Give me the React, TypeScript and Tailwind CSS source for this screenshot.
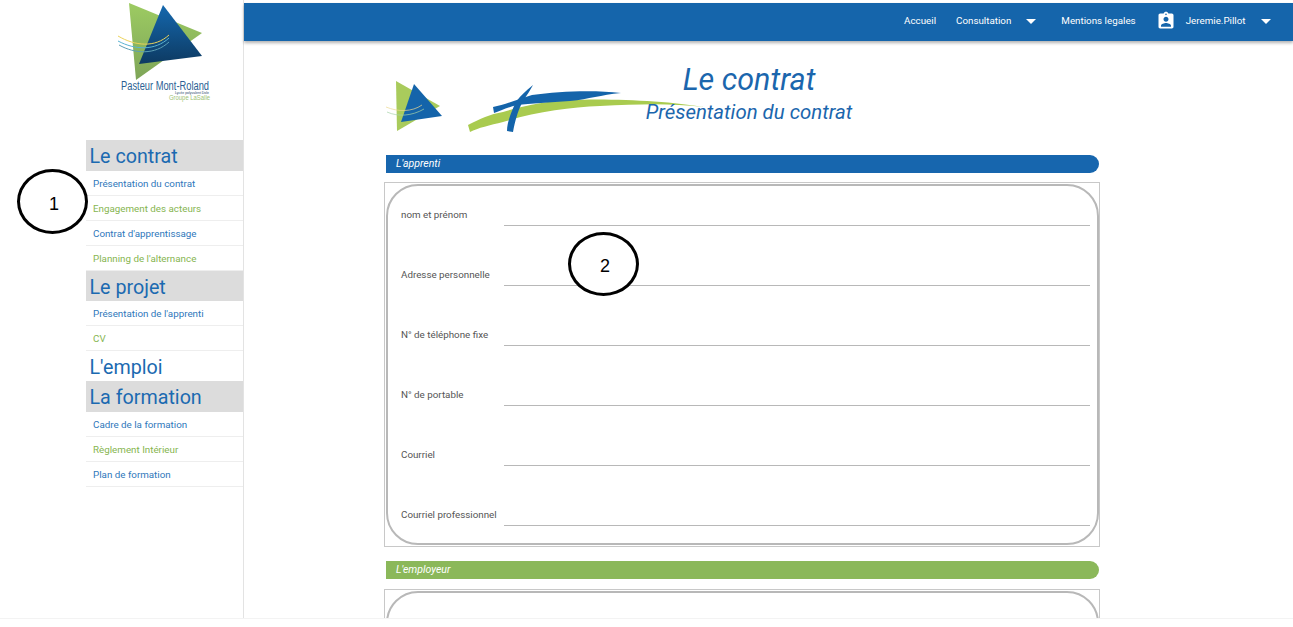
const font = "font-['Roboto',sans-serif]";

const MENU = [
  {
    title: "Le contrat",
    grey: true,
    items: [
      "Présentation du contrat",
      "Engagement des acteurs",
      "Contrat d'apprentissage",
      "Planning de l'alternance",
    ],
  },
  {
    title: "Le projet",
    grey: true,
    items: ["Présentation de l'apprenti", "CV"],
  },
  { title: "L'emploi", grey: false, items: [] },
  {
    title: "La formation",
    grey: true,
    items: ["Cadre de la formation", "Règlement Intérieur", "Plan de formation"],
  },
];

const APPRENTI = [
  "nom et prénom",
  "Adresse personnelle",
  "N° de téléphone fixe",
  "N° de portable",
  "Courriel",
  "Courriel professionnel",
];

function Caret() {
  return (
    <span className="h-0 w-0 border-x-[5px] border-t-[5px] border-x-transparent border-t-white" />
  );
}

function SchoolLogo() {
  return (
    <svg width="157" height="130" viewBox="86 3 157 130" className="block">
      <defs>
        <linearGradient id="logoBlue" x1="0" y1="0" x2="0" y2="1">
          <stop offset="0" stopColor="#1568ae" />
          <stop offset="1" stopColor="#0d3a62" />
        </linearGradient>
        <linearGradient id="logoGreen" x1="0" y1="0" x2="0" y2="1">
          <stop offset="0" stopColor="#9dcb62" />
          <stop offset="1" stopColor="#7ea558" />
        </linearGradient>
      </defs>
      <polygon points="129,3 202,33 136,80" fill="url(#logoGreen)" />
      <polygon points="163,5 202,56 139,64" fill="url(#logoBlue)" />
      <path d="M118 36 C135 46 155 48 169 35" fill="none" stroke="#ecd35a" strokeWidth="1" />
      <path d="M118 41 C135 50 155 51 169 38" fill="none" stroke="#58b3d3" strokeWidth="1" />
      <path d="M119 45 C135 54 155 55 169 42" fill="none" stroke="#5c9fb5" strokeWidth="1" />
      <text x="121" y="90" fontFamily="Liberation Sans, sans-serif" fontSize="12.5" textLength="88" lengthAdjust="spacingAndGlyphs" fill="#2c5f93">
        Pasteur Mont-Roland
      </text>
      <text x="175" y="94" fontFamily="Liberation Sans, sans-serif" fontSize="3.5" textLength="34" lengthAdjust="spacingAndGlyphs" fill="#28496e">
        Lycée polyvalent Dole
      </text>
      <text x="169" y="100" fontFamily="Liberation Sans, sans-serif" fontSize="7" textLength="41" lengthAdjust="spacingAndGlyphs" fill="#9cc274">
        Groupe LaSalle
      </text>
    </svg>
  );
}

function BannerArt() {
  return (
    <svg width="340" height="60" viewBox="384 78 340 60" className="absolute left-0 top-[19px]">
      <polygon points="396,82 440,107 397,132" fill="#a9cb5c" />
      <polygon points="414,85 442,117 401,123" fill="#1464aa" />
      <path d="M386 108 C398 113 412 113 422 106" fill="none" stroke="#ecd98f" strokeWidth="0.7" />
      <path d="M387 113 C398 118 412 117 424 110" fill="none" stroke="#a6d3a8" strokeWidth="0.7" />
      <path
        d="M468 126 C480 120 490 115 503 113 C525 106 550 102 570 101 C610 99 670 102 704 108 C670 104 640 105 600 107 C570 108 535 113 503 123 C490 126 478 129 470 133 Z"
        fill="#a9cb4f"
      />
      <path
        d="M493 108 C505 106 518 100 532 96 C560 92 595 91 621 94 C600 96 590 100 570 102 C550 103 530 105 517 106 C508 108 500 112 494 114 Z"
        fill="#1464aa"
      />
      <path d="M533 86 C526 92 518 98 514 107 C510 116 507 125 507 132 L513 133 C515 122 518 112 521 106 C524 100 530 92 533 86 Z" fill="#1464aa" />
    </svg>
  );
}

function Bar({ label, color }: { label: string; color: string }) {
  return (
    <div className={`ml-[2px] mr-[1px] h-[18px] rounded-r-[9px] pl-[10px] text-[10.5px] italic leading-[18px] text-white ${color}`}>
      {label}
    </div>
  );
}

export default function App() {
  return (
    <div className={`h-[627px] overflow-hidden bg-white ${font}`}>
      <div className="flex h-[619px] overflow-hidden border-b border-[#f3f3f3] pl-[86px]">
        <aside className="w-[158px] shrink-0 border-r border-[#e3e3e3] pt-[3px]">
          <div className="h-[137px]">
            <SchoolLogo />
          </div>
          {MENU.map((section) => (
            <div key={section.title}>
              <div
                className={`pl-[3.5px] text-[19.7px] leading-[33px] text-[#1b6ab1] ${
                  section.grey ? "h-[30.5px] bg-[#dcdcdc]" : "h-[30px]"
                }`}
              >
                {section.title}
              </div>
              {section.items.map((item, i) => (
                <div
                  key={item}
                  className={`h-[25px] border-b border-[#eeeeee] pl-[7px] text-[9.8px] leading-[25px] ${
                    i % 2 === 0 ? "text-[#2f78bb]" : "text-[#86b550]"
                  }`}
                >
                  {item}
                </div>
              ))}
            </div>
          ))}
        </aside>

        <div className="flex min-w-0 flex-1 flex-col pt-[3px]">
          <header className="flex h-[38px] shrink-0 items-center bg-[#1565ab] pb-[2px] pl-[660px] text-[9.8px] text-white shadow-[0_2px_3px_rgba(0,0,0,0.3)]">
            <span className="mr-[20px]">Accueil</span>
            <span className="mr-[15px]">Consultation</span>
            <Caret />
            <span className="ml-[25px] mr-[20px]">Mentions legales</span>
            <svg width="20" height="20" viewBox="0 0 24 24" fill="white" className="mr-[10px]">
              <path d="M19 3h-4.18C14.4 1.84 13.3 1 12 1c-1.3 0-2.4.84-2.82 2H5c-1.1 0-2 .9-2 2v14c0 1.1.9 2 2 2h14c1.1 0 2-.9 2-2V5c0-1.1-.9-2-2-2zm-7 0c.55 0 1 .45 1 1s-.45 1-1 1-1-.45-1-1 .45-1 1-1zm0 4c1.66 0 3 1.34 3 3s-1.34 3-3 3-3-1.34-3-3 1.34-3 3-3zm6 12H6v-1.4c0-2 4-3.1 6-3.1s6 1.1 6 3.1V19z" />
            </svg>
            <span className="mr-[15px]">Jeremie.Pillot</span>
            <Caret />
          </header>

          <main className="ml-[140px] w-[716px] shrink-0">
            <div className="relative mt-[17px] h-[97px] pt-[3px] text-center italic text-[#1b66ad]">
              <BannerArt />
              <div className="relative ml-[14px] text-[30.5px] leading-[38px]">Le contrat</div>
              <div className="relative ml-[14px] text-[20.4px] leading-[27px]">Présentation du contrat</div>
            </div>

            <Bar label="L'apprenti" color="bg-[#1766ae]" />

            <div className="mt-[9px] border border-[#c8c8c8] py-[1px] pl-[1px]">
              <div className="flex flex-col gap-[39px] rounded-[32px] border-2 border-[#b8b8b8] pb-[17px] pl-[13px] pr-[7px] pt-[19px]">
                {APPRENTI.map((label) => (
                  <div key={label} className="flex h-[21px] items-center text-[9.8px] text-[#555555]">
                    <span className="w-[103px] shrink-0">{label}</span>
                    <span className="h-full flex-1 border-b border-[#b8b8b8]" />
                  </div>
                ))}
              </div>
            </div>

            <div className="mt-[14px]">
              <Bar label="L'employeur" color="bg-[#8bb85a]" />
            </div>

            <div className="mt-[10px] border border-[#c8c8c8] py-[1px] pl-[1px]">
              <div className="flex h-[120px] flex-col rounded-[32px] border-2 border-[#b8b8b8] pl-[13px] pt-[22px]">
                <span className="text-[9.8px] text-[#555555]">Nom de l'entreprise</span>
              </div>
            </div>
          </main>
        </div>
      </div>

      {/* Annotation circles sit over the page */}
      <div className="absolute left-[17px] top-[169px] flex h-[65px] w-[71px] items-center justify-center rounded-[50%] border-[3px] border-black bg-white pl-[3px] pt-[5px] font-['Liberation_Sans',sans-serif] text-[18px] text-black">
        1
      </div>
      <div className="absolute left-[568px] top-[232px] flex h-[64px] w-[71px] items-center justify-center rounded-[50%] border-[3px] border-black bg-white pl-[3px] pt-[4px] font-['Liberation_Sans',sans-serif] text-[18px] text-black">
        2
      </div>
    </div>
  );
}
